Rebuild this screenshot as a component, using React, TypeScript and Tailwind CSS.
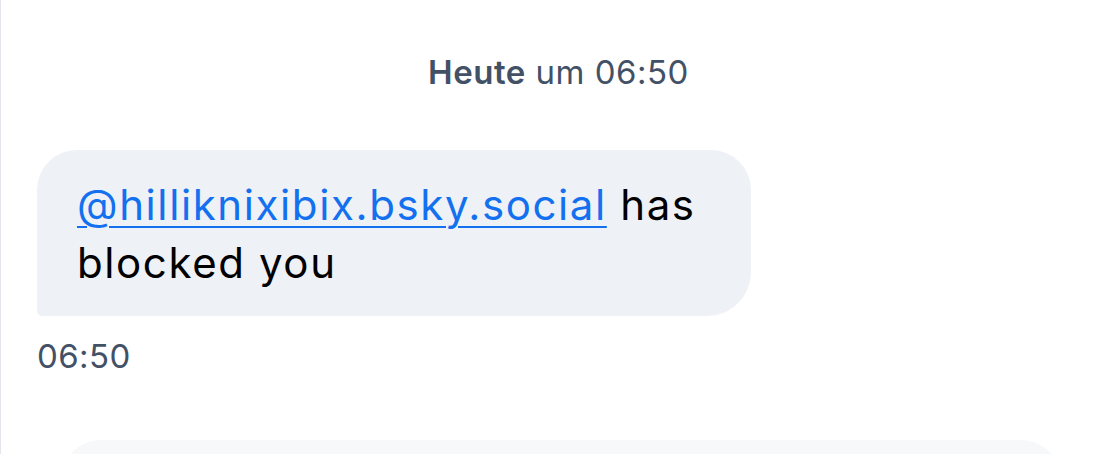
export default function App() {
  return (
    <div
      className="h-[454px] w-[1116px] overflow-hidden border-l border-[#e3e6eb] bg-white"
      style={{ fontFamily: "Inter, 'Noto Sans', sans-serif" }}
    >
      <div className="px-[36px]">
        {/* date separator */}
        <div className="pt-[50px] text-center text-[33px] leading-[44px] tracking-[0.5px] text-[#435166]">
          <span className="font-semibold">Heute</span> um 06:50
        </div>

        {/* received message */}
        <div className="mt-[56px] w-[714px] rounded-t-[40px] rounded-br-[44px] rounded-bl-[5px] bg-[#eef1f6] pl-[40px] pr-[42px] pt-[26px] pb-[24px] text-[42px] leading-[58px] tracking-[1.6px] text-black">
          <a href="#" className="text-[#1370ef] underline decoration-[2px] underline-offset-[6px]">
            @hilliknixibix.bsky.social
          </a>{" "}
          has blocked you
        </div>
        <div className="mt-[18px] text-[33px] leading-[44px] tracking-[0.4px] text-[#435166]">06:50</div>

        {/* next message, cut off */}
        <div className="ml-[24px] mt-[62px] h-[80px] w-[1000px] rounded-[40px] bg-[#f7f8fa]" />
      </div>
    </div>
  );
}
